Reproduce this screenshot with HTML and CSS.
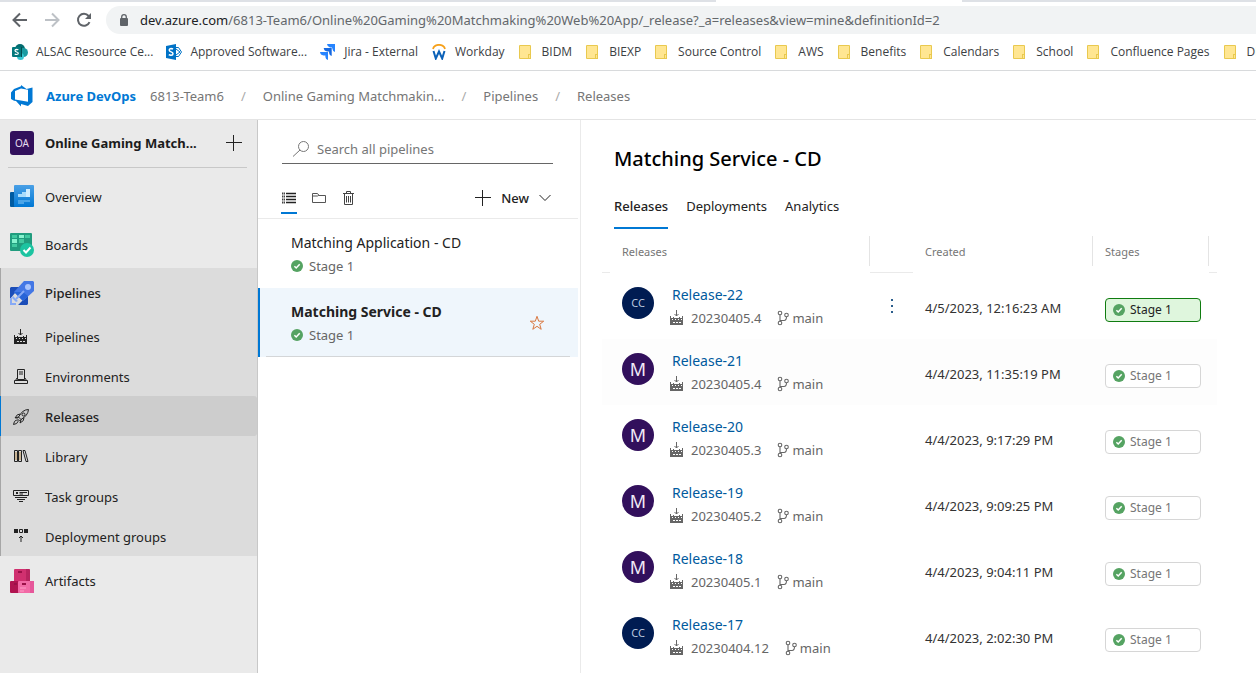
FILE: index.html
```html
<!DOCTYPE html>
<html lang="en">
<head>
<meta charset="utf-8">
<title>Releases - Pipelines</title>
<link rel="stylesheet" href="styles.css">
</head>
<body>
<svg class="defs" aria-hidden="true">
  <symbol id="folder" viewBox="0 0 16 16"><path d="M2 2h10v12H2z" fill="#ffe692"/><path d="M12.500 10.500v-9h-11v13h9" fill="none" stroke="#e9c94f"/><rect x="10.500" y="10.500" width="2" height="4" fill="#ffe692" stroke="#e9c94f"/></symbol>
  <symbol id="check" viewBox="0 0 12 12"><circle cx="6" cy="6" r="6" fill="#55a362"/><path d="M3.400 6.200l1.800 1.800 3.500-3.700" fill="none" stroke="#fff" stroke-width="1.500"/></symbol>
  <symbol id="build" viewBox="0 0 16 16"><path d="M7.500 0v6M5.500 4l2 2 2-2" fill="none" stroke="currentColor"/><path fill="currentColor" fill-rule="evenodd" d="M1 6h1v2h2V7h1v1h5V7h1v1h2V6h1v9H1zM3 9v1h1V9zm3 0v1h1V9zm3 0v1h1V9zm3 0v1h1V9zM4 12v1h2v-1zm3 0v1h2v-1zm3 0v1h2v-1z"/></symbol>
  <symbol id="branch" viewBox="0 0 16 16"><g fill="none" stroke="currentColor" stroke-width="1.100"><circle cx="4" cy="3" r="1.800"/><circle cx="4" cy="13" r="1.800"/><circle cx="10.500" cy="5" r="1.800"/><path d="M4 4.800v6.400M4 10.500h4q2.500 0 2.500-3.700"/></g></symbol>
  <symbol id="plus" viewBox="0 0 16 16"><path d="M7.500 0v16M0 7.500h16" fill="none" stroke="currentColor"/></symbol>
</svg>

<div class="tabstrip"><span class="tab-active"></span></div>
<div class="address-row">
  <button class="nav-button" aria-label="Back"><svg width="16" height="16" viewBox="0 0 16 16"><path d="M15 8H2M8 1.500L1.500 8 8 14.500" fill="none" stroke="#5f6368" stroke-width="2"/></svg></button>
  <button class="nav-button" aria-label="Forward"><svg width="16" height="16" viewBox="0 0 16 16"><path d="M1 8h13M8 1.500L14.500 8 8 14.500" fill="none" stroke="#bdc1c6" stroke-width="2"/></svg></button>
  <button class="nav-button" aria-label="Reload"><svg width="16" height="16" viewBox="0 0 16 16"><path d="M13.500 10.200A6 6 0 1 1 12.600 4L14 5.500" fill="none" stroke="#5f6368" stroke-width="2"/><path d="M15 1v6H9z" fill="#5f6368"/></svg></button>
  <div class="url">
    <svg width="10" height="12" viewBox="0 0 10 12"><rect x="1" y="4" width="8" height="8" rx="1" fill="#5f6368"/><path d="M2.700 5V3a2.300 2.300 0 0 1 4.600 0v2" fill="none" stroke="#5f6368" stroke-width="1.300"/></svg>
    <span class="url-text"><span class="url-host">dev.azure.com</span>/6813-Team6/Online%20Gaming%20Matchmaking%20Web%20App/_release?_a=releases&amp;view=mine&amp;definitionId=2</span>
  </div>
</div>
<nav class="bookmarks" aria-label="Bookmarks">
  <a href="#"><svg width="16" height="16" viewBox="0 0 16 16"><circle cx="8" cy="5" r="5" fill="#036c70"/><circle cx="11.500" cy="8.500" r="4.500" fill="#1a9ba1"/><circle cx="8.500" cy="12.500" r="3.500" fill="#37c6d0"/><path d="M9 3h1v10H9z" fill="#024d50"/><rect y="3" width="9" height="10" rx="1" fill="#03787c"/><path d="M6.400 5.800Q5.700 5.400 4.600 5.400 3 5.500 3 6.600q0 1 1.600 1.400 1.700.4 1.700 1.300 0 1.200-1.700 1.200-1 0-1.900-.5" fill="none" stroke="#fff" stroke-width="1.200"/></svg>ALSAC Resource Ce...</a>
  <a href="#"><svg width="16" height="16" viewBox="0 0 16 16"><path d="M9.500 3.500h3L15.500 8l-3 4.500h-3M10 5l4 3-4 3" fill="none" stroke="#0072c6"/><path d="M0 2l10-2v16L0 14z" fill="#0072c6"/><path d="M7 5Q6.200 4.500 5 4.500 3.200 4.600 3.200 6q0 1.200 1.900 1.900Q7 8.600 7 9.700q0 1.500-2 1.600-1.200 0-2.200-.6" fill="none" stroke="#fff" stroke-width="1.500"/></svg>Approved Software...</a>
  <a href="#"><svg width="16" height="16" viewBox="0 0 16 16"><path d="M7 0h8v8q-2.300-.6-2.500-3L12 3.500H10Q7.300 3 7 0z" fill="#2684ff"/><path d="M3.700 4h8v8q-2.400-.6-2.600-3V7.500H7.200Q4 7 3.700 4z" fill="#1769e0"/><path d="M0 8h8v8q-2.400-.6-2.600-3v-1.500H3.500Q.3 11 0 8z" fill="#2684ff"/></svg>Jira - External</a>
  <a href="#"><svg width="16" height="16" viewBox="0 0 16 16"><path d="M2 5q1-4.200 6-4.200T14 5" fill="none" stroke="#f6a01a" stroke-width="1.700"/><path d="M2.500 7l2.300 7.500L8 7.500l3.200 7L13.500 7" fill="none" stroke="#0b61b8" stroke-width="2"/></svg>Workday</a>
  <a href="#"><svg width="16" height="16"><use href="#folder"/></svg>BIDM</a>
  <a href="#"><svg width="16" height="16"><use href="#folder"/></svg>BIEXP</a>
  <a href="#"><svg width="16" height="16"><use href="#folder"/></svg>Source Control</a>
  <a href="#"><svg width="16" height="16"><use href="#folder"/></svg>AWS</a>
  <a href="#"><svg width="16" height="16"><use href="#folder"/></svg>Benefits</a>
  <a href="#"><svg width="16" height="16"><use href="#folder"/></svg>Calendars</a>
  <a href="#"><svg width="16" height="16"><use href="#folder"/></svg>School</a>
  <a href="#"><svg width="16" height="16"><use href="#folder"/></svg>Confluence Pages</a>
  <a href="#"><svg width="16" height="16"><use href="#folder"/></svg>DI</a>
</nav>

<header class="site-header">
  <svg width="22" height="22" viewBox="0 0 22 22"><path fill="#0078d4" fill-rule="evenodd" d="M0 7.500L3 4l7-2.700V0l5.500 4 6-1.500v14.500l-4.500 4-7-2v2.500L5 16l-2-.3L0 14zM4 6v8.500l13 2.300V4.800L10 3.500z"/></svg>
  <a class="brand" href="#">Azure DevOps</a>
  <nav class="crumbs" aria-label="Breadcrumb">
    <a href="#">6813-Team6</a><span class="slash">/</span><a href="#">Online Gaming Matchmakin...</a><span class="slash">/</span><a href="#">Pipelines</a><span class="slash">/</span><a href="#">Releases</a>
  </nav>
</header>

<div class="workspace">
  <nav class="sidebar" aria-label="Project">
    <div class="project"><span class="project-badge">OA</span><strong>Online Gaming Match...</strong><button aria-label="Add"><svg width="16" height="16"><use href="#plus"/></svg></button></div>
    <a class="hub" href="#"><svg width="24" height="24" viewBox="0 0 24 24"><defs><linearGradient id="ov" x2="0" y2="1"><stop stop-color="#4aa0e6"/><stop offset="1" stop-color="#0078d4"/></linearGradient></defs><rect y="7" width="8" height="15" rx="1" fill="#005ba1"/><rect x="4" width="20" height="22" rx="1" fill="url(#ov)"/><path d="M8 12V9h4V7h4V4h4v8z" fill="#a9dcfb"/><path d="M16 4h4v8h-4z" fill="#d0edff"/><path d="M8 15h12v2H8zM8 19h6v-2H8z" fill="#4ba5e8"/></svg>Overview</a>
    <a class="hub" href="#"><svg width="24" height="24" viewBox="0 0 24 24"><rect width="22" height="18" rx="1" fill="#219c7e"/><path d="M2 2h5v3H2zM15 2h5v3h-5zM9 6h5v4H9zM2 11h5v3H2z" fill="#41c9a0"/><path d="M9 2h5v3H9zM2 6h5v4H2z" fill="#86f2ce"/><circle cx="17" cy="17" r="7" fill="#1cc4a1"/><path d="M13.500 17l2.500 2.500 4.500-5" fill="none" stroke="#fff" stroke-width="2"/></svg>Boards</a>
    <div class="hub-group">
      <a class="hub active" href="#"><svg width="24" height="24" viewBox="0 0 24 24"><path d="M0 7l1-1h9L0 18zM18 14v9l-1 1H8z" fill="#1b4db8"/><path d="M14 0h9l1 1v9L13 20l-9-9z" fill="#4377e5"/><path d="M13 11l5 4-5 5-9-9z" fill="#2864d7"/><circle cx="18" cy="6" r="3" fill="#a9c4fc"/><path d="M6 18l8-8" stroke="#86a9f5" stroke-width="2"/><path d="M0 17h2v5h4v2H0zM3 15l5 5-2 1-4-4z" fill="#86a9f5"/></svg>Pipelines</a>
      <a class="sub" href="#"><svg width="16" height="16"><use href="#build"/></svg>Pipelines</a>
      <a class="sub" href="#"><svg width="16" height="16" viewBox="0 0 16 16"><g fill="none" stroke="currentColor"><path d="M4.500 10.500v-10h7v10zM6 3h4M6 5h4M4 9L2.500 11.500h11L12 9M1.500 11.500h13v3h-13z"/></g></svg>Environments</a>
      <a class="sub active" href="#"><svg width="16" height="16" viewBox="0 0 16 16"><g fill="none" stroke="currentColor"><path d="M15.500.5q-6 0-10 7.500l2.500 2.500q7-4 7.500-10z"/><circle cx="10.500" cy="5.500" r="1.500"/><path d="M7.500 5q-3.500-.5-5.500 4l3.500-1M11 8.500q.5 3.500-4 5.500l1-3.500M5.500 8L4 9.500 6.500 12 8 10.500M3.500 11q-2.500.5-3 4.500 4-.5 4.500-3z"/></g></svg>Releases</a>
      <a class="sub" href="#"><svg width="16" height="16" viewBox="0 0 16 16"><g fill="none" stroke="currentColor"><path d="M1.500 1.500v11h3v-11zM5.500 1.500v11h3v-11zM10 1.500l3 11h2l-3-11z"/><path d="M3 3v8M7 3v8" stroke="#b58a4a"/></g></svg>Library</a>
      <a class="sub" href="#"><svg width="16" height="16" viewBox="0 0 16 16"><path d="M.5 1.500h15v5H.5zM2 8.500h12M4 10.500h8M6 12.500h4M6.500 3.500H14M6.500 5H10" fill="none" stroke="currentColor"/><path d="M3 3h2v2H3z" fill="currentColor"/></svg>Task groups</a>
      <a class="sub" href="#"><svg width="16" height="16" viewBox="0 0 16 16"><path d="M1 0h4v4H1zM11 0h4v4h-4z" fill="currentColor"/><path d="M6.500.5h3v3h-3zM8 13V7M6 9l2-2 2 2" fill="none" stroke="currentColor"/></svg>Deployment groups</a>
    </div>
    <a class="hub" href="#"><svg width="24" height="24" viewBox="0 0 24 24"><rect x="4" width="16" height="13" rx="1" fill="#d0306f"/><path d="M16 0h3l1 1v12h-4z" fill="#b8245f"/><rect y="12" width="9" height="12" rx="1" fill="#b01450"/><rect x="8" y="12" width="16" height="12" rx="1" fill="#f26aa6"/><path d="M20 12h4v12h-4z" fill="#e6579a"/><path d="M8 2h4v2H8zM4 14h3v2H4zM12 14h4v2h-4z" fill="#9b1048"/><path d="M10 19h6M10 22h4" stroke="#ff9dc8"/></svg>Artifacts</a>
  </nav>

  <section class="pipelines" aria-label="Pipelines">
    <label class="search"><svg width="16" height="16" viewBox="0 0 16 16"><circle cx="10.500" cy="5.500" r="5" fill="none" stroke="currentColor"/><path d="M7 9L0 15.500" stroke="currentColor"/></svg><input type="text" placeholder="Search all pipelines" aria-label="Search all pipelines"></label>
    <div class="toolbar">
      <button class="tool selected" aria-label="List"><svg width="16" height="16" viewBox="0 0 16 16"><path d="M5 3.500h10M5 6.500h10M5 9.500h10M5 12.500h10" stroke="#222" stroke-width="1.500"/><path d="M1 3.500h3M1 6.500h3M1 9.500h3M1 12.500h3" stroke="#444" stroke-width="2" stroke-dasharray="1.300 .5"/></svg></button>
      <button class="tool" aria-label="Folders"><svg width="16" height="16" viewBox="0 0 16 16"><path d="M1.500 12.500v-9h5l1.500 2h6.500v7zM1.500 6h5L8 5" fill="none" stroke="#555"/></svg></button>
      <button class="tool" aria-label="Delete"><svg width="16" height="16" viewBox="0 0 16 16"><path d="M2 3.500h11M5.500 3V1.500h4V3M3.500 4v10.500h8V4M5.500 6v6.500M7.500 6v6.500M9.500 6v6.500" fill="none" stroke="#444"/></svg></button>
      <button class="new"><svg width="16" height="16"><use href="#plus"/></svg>New<svg width="12" height="8" viewBox="0 0 12 8"><path d="M.5 1L6 6.500 11.500 1" fill="none" stroke="currentColor"/></svg></button>
    </div>
    <a class="pipe" href="#"><span class="pipe-name">Matching Application - CD</span><span class="pipe-stage"><svg width="12" height="12"><use href="#check"/></svg>Stage 1</span></a>
    <div class="pipe selected">
      <a href="#"><span class="pipe-name">Matching Service - CD</span><span class="pipe-stage"><svg width="12" height="12"><use href="#check"/></svg>Stage 1</span></a>
      <button aria-label="Favorite"><svg width="16" height="16" viewBox="0 0 16 16"><path d="M8 1.300l1.700 4.900h5L10.700 9.300l1.500 5L8 11.300l-4.200 3 1.500-5L1.300 6.200h5z" fill="none" stroke="#d9773f"/></svg></button>
    </div>
  </section>

  <main class="content">
    <h1>Matching Service - CD</h1>
    <div class="tabs" role="tablist"><button role="tab" class="selected" aria-selected="true">Releases</button><button role="tab">Deployments</button><button role="tab">Analytics</button></div>
    <table class="releases">
      <colgroup><col class="c-edge"><col><col class="c-menu"><col class="c-created"><col class="c-stage"><col class="c-edge"></colgroup>
      <thead><tr><th class="line"></th><th class="divided">Releases</th><th class="line"></th><th class="divided">Created</th><th class="divided">Stages</th><th class="line"></th></tr></thead>
      <tbody>
        <tr><td></td><td><div class="release"><span class="avatar cc">CC</span><div><a href="#">Release-22</a><p><svg width="16" height="16"><use href="#build"/></svg><span>20230405.4</span><svg width="16" height="16"><use href="#branch"/></svg><span>main</span></p></div></div></td><td><button class="more" aria-label="More"><svg width="4" height="16" viewBox="0 0 4 16"><path d="M1 1h2v2H1zM1 7h2v2H1zM1 13h2v2H1z" fill="#2b5d8c"/></svg></button></td><td class="created">4/5/2023, 12:16:23 AM</td><td class="stage-cell"><button class="stage current"><svg width="12" height="12"><use href="#check"/></svg>Stage 1</button></td><td></td></tr>
        <tr class="alt"><td></td><td><div class="release"><span class="avatar">M</span><div><a href="#">Release-21</a><p><svg width="16" height="16"><use href="#build"/></svg><span>20230405.4</span><svg width="16" height="16"><use href="#branch"/></svg><span>main</span></p></div></div></td><td></td><td class="created">4/4/2023, 11:35:19 PM</td><td class="stage-cell"><button class="stage"><svg width="12" height="12"><use href="#check"/></svg>Stage 1</button></td><td></td></tr>
        <tr><td></td><td><div class="release"><span class="avatar">M</span><div><a href="#">Release-20</a><p><svg width="16" height="16"><use href="#build"/></svg><span>20230405.3</span><svg width="16" height="16"><use href="#branch"/></svg><span>main</span></p></div></div></td><td></td><td class="created">4/4/2023, 9:17:29 PM</td><td class="stage-cell"><button class="stage"><svg width="12" height="12"><use href="#check"/></svg>Stage 1</button></td><td></td></tr>
        <tr><td></td><td><div class="release"><span class="avatar">M</span><div><a href="#">Release-19</a><p><svg width="16" height="16"><use href="#build"/></svg><span>20230405.2</span><svg width="16" height="16"><use href="#branch"/></svg><span>main</span></p></div></div></td><td></td><td class="created">4/4/2023, 9:09:25 PM</td><td class="stage-cell"><button class="stage"><svg width="12" height="12"><use href="#check"/></svg>Stage 1</button></td><td></td></tr>
        <tr><td></td><td><div class="release"><span class="avatar">M</span><div><a href="#">Release-18</a><p><svg width="16" height="16"><use href="#build"/></svg><span>20230405.1</span><svg width="16" height="16"><use href="#branch"/></svg><span>main</span></p></div></div></td><td></td><td class="created">4/4/2023, 9:04:11 PM</td><td class="stage-cell"><button class="stage"><svg width="12" height="12"><use href="#check"/></svg>Stage 1</button></td><td></td></tr>
        <tr><td></td><td><div class="release"><span class="avatar cc">CC</span><div><a href="#">Release-17</a><p><svg width="16" height="16"><use href="#build"/></svg><span>20230404.12</span><svg width="16" height="16"><use href="#branch"/></svg><span>main</span></p></div></div></td><td></td><td class="created">4/4/2023, 2:02:30 PM</td><td class="stage-cell"><button class="stage"><svg width="12" height="12"><use href="#check"/></svg>Stage 1</button></td><td></td></tr>
      </tbody>
    </table>
  </main>
</div>
</body>
</html>
```

FILE: styles.css
```css
* { box-sizing: border-box; }
body {
  margin: 0;
  height: 100vh;
  display: flex;
  flex-direction: column;
  overflow: hidden;
  background: #fff;
  color: #222;
  font: 13px/20px "Noto Sans", "Open Sans", sans-serif;
}
a { color: inherit; text-decoration: none; }
button { border: 0; padding: 0; background: none; color: inherit; font: inherit; display: flex; align-items: center; }
svg { flex: none; display: block; }
.defs { position: absolute; width: 0; height: 0; }

/* Browser chrome */
.tabstrip { flex: none; height: 2px; background: #dee1e6; }
.tab-active { display: block; height: 2px; width: 246px; margin-left: 57%; background: #fff; }
.address-row { flex: none; display: flex; align-items: center; gap: 16px; height: 36px; padding: 4px 0 4px 12px; }
.url { flex: 1; min-width: 0; display: flex; align-items: center; gap: 11px; height: 28px; margin-left: -2px; padding-left: 13px; background: #f1f3f4; border-radius: 14px 0 0 14px; }
.url-text { color: #63676b; white-space: nowrap; overflow: hidden; }
.url-host { color: #202124; }
.bookmarks { flex: none; display: flex; gap: 13px; height: 33px; padding: 0 0 4px 12px; border-bottom: 1px solid #d8dadc; overflow: hidden; font-family: "Open Sans", "Noto Sans", sans-serif; font-size: 12px; color: #3c4043; }
.bookmarks a { display: flex; align-items: center; gap: 8px; white-space: nowrap; }

/* Header */
.site-header { flex: none; display: flex; align-items: center; height: 49px; padding: 1px 11px 0; border-bottom: 1px solid #e4e4e4; }
.brand { margin: 0 14px 0 13px; color: #0078d4; font-weight: 700; }
.crumbs { display: flex; color: #767676; white-space: nowrap; }
.slash { margin: 0 17px; color: #aaa; }

.workspace { flex: 1; min-height: 0; display: flex; }

/* Project navigation */
.sidebar { flex: none; width: 258px; background: #eaeaea; border-right: 1px solid #c8c8c8; }
.project { display: flex; align-items: center; gap: 11px; height: 48px; margin: 0 10px 4px 8px; padding: 0 5px 1px 2px; border-bottom: 1px solid #c8c8c8; }
.project strong { flex: 1; white-space: nowrap; font-weight: 700; color: #1c1c1c; }
.project-badge { display: grid; place-items: center; width: 24px; height: 24px; border-radius: 3px; background: #32105c; color: #e4dcef; font-size: 10px; }
.hub { display: flex; align-items: center; gap: 11px; height: 48px; padding: 1px 0 0 10px; }
.hub-group { background: #dcdcdc; border-left: 1px solid #a6a6a6; }
.hub-group .hub { padding-left: 9px; }
.hub.active, .sub.active { font-weight: 500; }
.sub { display: flex; align-items: center; gap: 16px; height: 40px; padding: 1px 0 0 12px; }
.sub.active { margin-left: -1px; border-left: 1px solid #0078d4; border-radius: 0 3px 3px 0; background: #cdcdcd; }

/* Pipeline list */
.pipelines { flex: none; width: 323px; padding-right: 2px; border-right: 1px solid #eaeaea; }
.search { display: flex; align-items: center; gap: 8px; height: 32px; margin: 12px 25px 0 24px; padding: 2px 0 0 11px; border-bottom: 1px solid #666; color: #767676; }
.search input { flex: 1; min-width: 0; border: 0; padding: 0; outline: 0; background: none; color: #222; font: inherit; }
.search input::placeholder { color: #767676; opacity: 1; }
.toolbar { display: flex; align-items: center; gap: 14px; height: 55px; padding: 14px 27px 0 23px; border-bottom: 1px solid #eaeaea; }
.tool { height: 32px; border-bottom: 2px solid transparent; border-top: 2px solid transparent; }
.tool.selected { border-bottom-color: #0078d4; }
.new { gap: 10px; margin-left: auto; font-weight: 500; }
.pipe { display: flex; flex-direction: column; height: 69px; padding: 12px 0 0 33px; }
.pipe.selected { flex-direction: row; justify-content: space-between; padding: 12px 33px 0 31px; border-left: 2px solid #0078d4; background: linear-gradient(#d4d6d8, #d4d6d8) 6px 100% / calc(100% - 14px) 1px no-repeat #eff6fc; }
.pipe.selected .pipe-name { font-weight: 700; }
.pipe.selected button { align-self: flex-start; height: 46px; }
.pipe-name { display: block; font-size: 14px; line-height: 24px; }
.pipe-stage { display: flex; align-items: center; gap: 6px; line-height: 22px; color: #666; }

/* Releases */
.content { flex: 1; min-width: 0; overflow: hidden; padding: 24px 39px 0 21px; }
h1 { margin: 0 12px; font-size: 20px; line-height: 30px; font-weight: 500; color: #000; }
.tabs { display: flex; gap: 18px; margin: 10px 12px 3px; }
.tabs button { height: 45px; border-bottom: 2px solid transparent; }
.tabs .selected { border-bottom-color: #0078d4; font-weight: 500; }
.releases { width: 100%; table-layout: fixed; border-collapse: separate; border-spacing: 0; }
.c-edge { width: 8px; }
.c-menu { width: 43px; }
.c-created { width: 180px; }
.c-stage { width: 116px; }
.releases th { height: 41px; padding: 0 0 2px 12px; text-align: left; font-size: 11px; font-weight: 400; color: #767676; }
.releases th.line { padding: 0; border-bottom: 1px solid #eaeaea; }
.releases th.divided { background: linear-gradient(#e4e4e4, #e4e4e4) 100% 4px / 1px 30px no-repeat; }
.releases td { height: 66px; padding: 0; vertical-align: top; }
.alt td { background: #fdfdfd; }
.release { display: flex; gap: 16px; padding: 10px 0 0 12px; }
.avatar { display: grid; place-items: center; width: 32px; height: 32px; margin-top: 4px; border-radius: 50%; background: #32105c; color: #f0eaf6; font-size: 18px; }
.avatar.cc { background: #001c52; color: #b9c6de; font-size: 11px; }
.release a { display: block; padding-left: 2px; line-height: 24px; font-size: 14px; color: #005a9e; }
.release p { display: flex; align-items: center; gap: 5px; margin: 0; line-height: 22px; color: #666; }
.release p svg:first-child { margin: 0 1px 0 -1px; }
.release p svg + span + svg { margin-left: 10px; }
.release p svg:last-of-type + span { margin-left: -5px; }
.releases .more { width: 43px; height: 66px; justify-content: center; }
.releases .created { padding: 25px 0 0 12px; color: #333; white-space: nowrap; }
.releases .stage-cell { padding: 25px 8px 0 12px; }
.stage { gap: 5px; width: 96px; height: 24px; padding-left: 7px; border: 1px solid #d6d6d6; border-radius: 4px; background: #fff; color: #767676; font-size: 12px; }
.stage.current { border-color: #107c10; background: #dff6dd; color: #222; }
```
